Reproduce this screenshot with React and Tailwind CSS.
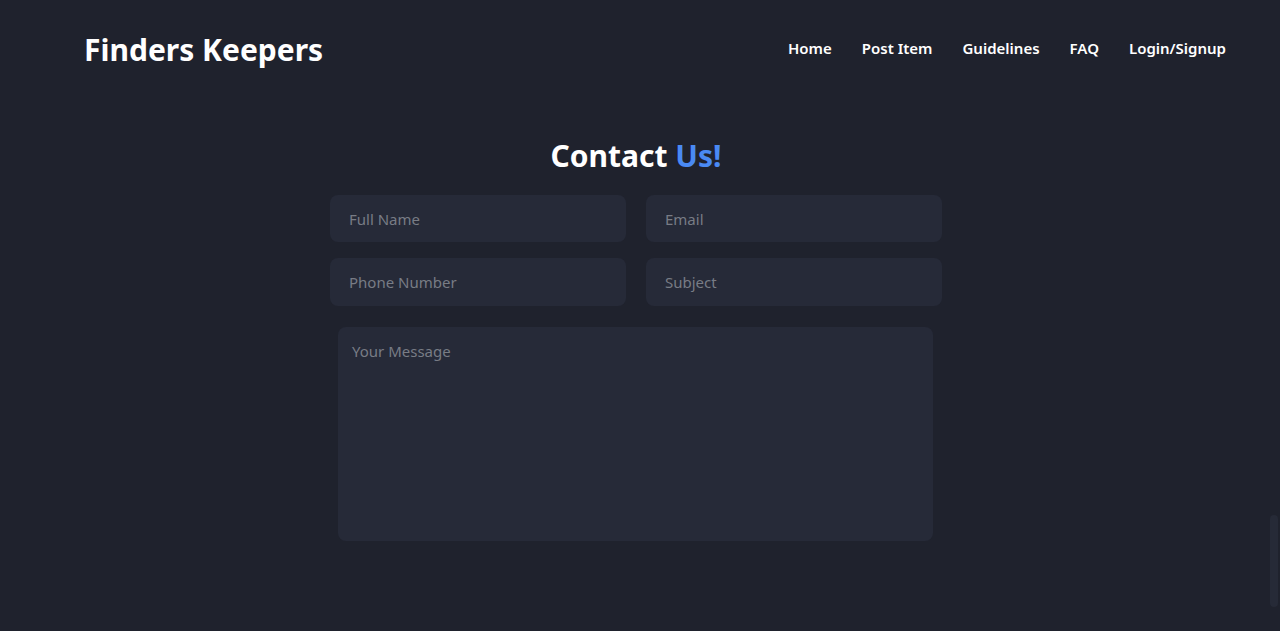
import React from 'react';

const links = ["Home", "Post Item", "Guidelines", "FAQ", "Login/Signup"];

export default function App() {
  return (
    <div className="min-h-screen bg-[#1f222d] text-white relative" style={{ fontFamily: '"Noto Sans", "Open Sans", sans-serif' }}>
      <header className="flex items-center justify-between pl-[84px] pr-[54px] pt-[28px]">
        <h1 className="text-[30px] font-bold leading-[44px]">Finders Keepers</h1>
        <nav className="flex gap-[30px] text-[15px] font-semibold mb-[3px]">
          {links.map(l => (
            <a key={l} href="#" className="hover:text-blue-400">{l}</a>
          ))}
        </nav>
      </header>

      <main className="flex flex-col items-center mt-[62px] pr-[8px]">
        <h2 className="text-[30px] font-bold leading-[44px]">
          Contact <span className="text-[#4a8af4]">Us!</span>
        </h2>
        <form className="w-[612px] mt-[17px]">
          <div className="grid grid-cols-2 gap-x-[20px] gap-y-[16px]">
            <input className="h-[47px] rounded-lg bg-[#262a38] px-[19px] text-[15px] placeholder-[#787c85] outline-none" placeholder="Full Name" />
            <input className="h-[47px] rounded-lg bg-[#262a38] px-[19px] text-[15px] placeholder-[#787c85] outline-none" placeholder="Email" />
            <input className="h-[48px] rounded-lg bg-[#262a38] px-[19px] text-[15px] placeholder-[#787c85] outline-none" placeholder="Phone Number" />
            <input className="h-[48px] rounded-lg bg-[#262a38] px-[19px] text-[15px] placeholder-[#787c85] outline-none" placeholder="Subject" />
          </div>
          <textarea className="block ml-[8px] mt-[21px] w-[595px] h-[214px] resize-none rounded-lg bg-[#262a38] px-[14px] py-[13px] text-[15px] placeholder-[#787c85] outline-none" placeholder="Your Message"></textarea>
        </form>
      </main>

      <div className="absolute right-[2px] top-[515px] h-[92px] w-[8px] rounded-full bg-[#262a37]"></div>
    </div>
  );
}
